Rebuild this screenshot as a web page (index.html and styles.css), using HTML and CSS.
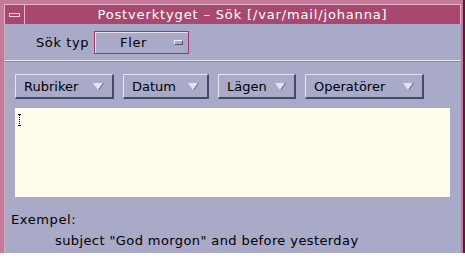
FILE: index.html
```html
<!DOCTYPE html>
<html lang="sv">
<head>
    <meta charset="UTF-8">
    <title>Postverktyget - Sök</title>
    <link rel="stylesheet" href="styles.css">
</head>
<body>
    <div class="window">
        <div class="titlebar">
            <div class="menu-btn"><span class="dash"></span></div>
            <div class="title">Postverktyget – Sök [/var/mail/johanna]</div>
        </div>
        <div class="content">
            <div class="type-row">
                <span class="label">Sök typ</span>
                <div class="choice">
                    <span>Fler</span>
                    <span class="choice-mark"></span>
                </div>
            </div>
            <div class="separator"></div>
            <div class="menu-row">
                <div class="menu-button" style="width:99px">Rubriker <span class="arrow"></span></div>
                <div class="menu-button" style="width:86px">Datum <span class="arrow"></span></div>
                <div class="menu-button" style="width:78px">Lägen <span class="arrow"></span></div>
                <div class="menu-button" style="width:119px">Operatörer <span class="arrow"></span></div>
            </div>
            <div class="textarea"><span class="caret"></span></div>
            <div class="example-label">Exempel:</div>
            <div class="example">subject "God morgon" and before yesterday</div>
        </div>
    </div>
</body>
</html>
```

FILE: styles.css
```css
body {
    margin: 0;
    padding: 0;
    background-color: #fff;
    font-family: "DejaVu Sans", sans-serif;
    width: 465px;
    height: 270px;
    overflow: hidden;
}
.window {
    width: 465px;
    height: 253px;
    box-sizing: border-box;
    background-color: #c47a98;
    border-right: 2px solid #5c1c38;
    padding: 4px 2px 0 4px;
    display: flex;
    flex-direction: column;
}
.titlebar {
    height: 19px;
    display: flex;
    background-color: #a8486e;
    border-top: 1px solid #e4b4c8;
    border-left: 1px solid #e4b4c8;
    border-right: 1px solid #e4b4c8;
}
.menu-btn {
    width: 19px;
    border-right: 1px solid #e4b4c8;
    display: flex;
    align-items: center;
    justify-content: center;
}
.dash {
    width: 9px;
    height: 2px;
    border: 1px solid #f0d0dc;
    background-color: #a8486e;
}
.title {
    flex: 1;
    text-align: center;
    color: #fff;
    font-size: 13px;
    letter-spacing: 0.85px;
    line-height: 19px;
}
.content {
    flex: 1;
    background-color: #a9a9c8;
    border-left: 1px solid #d8a8bc;
    padding: 0 10px 0 6px;
    font-size: 13px;
    letter-spacing: 0.6px;
    color: #000;
}
.type-row {
    display: flex;
    align-items: center;
    height: 36px;
    padding-left: 25px;
    gap: 5px;
}
.choice {
    width: 95px;
    height: 23px;
    box-sizing: border-box;
    border: 1px solid #9c3c64;
    box-shadow: inset 1px 1px 0 #e8e0ec;
    display: flex;
    align-items: center;
    padding-left: 25px;
    gap: 27px;
}
.choice-mark {
    width: 7px;
    height: 3px;
    border: 1px solid #f0f0f8;
    border-right-color: #505070;
    border-bottom-color: #505070;
}
.separator {
    height: 1px;
    background-color: #e4e4f0;
    border-bottom: 1px solid #8888a8;
    margin-left: -6px;
    margin-right: -10px;
}
.menu-row {
    display: flex;
    gap: 9px;
    padding: 12px 0 9px 4px;
}
.menu-button {
    height: 25px;
    box-sizing: border-box;
    border-top: 1px solid #e4e4f4;
    border-left: 1px solid #e4e4f4;
    border-right: 2px solid #48486a;
    border-bottom: 2px solid #48486a;
    display: flex;
    align-items: center;
    justify-content: space-between;
    padding: 0 9px 0 8px;
    letter-spacing: 0;
}
.arrow {
    flex: none;
    width: 0;
    height: 0;
    border-left: 5px solid transparent;
    border-right: 5px solid transparent;
    border-top: 7px solid #e4e4f0;
    filter: drop-shadow(1px 0 0 #55557a);
}
.textarea {
    margin-left: 4px;
    width: 435px;
    height: 89px;
    background-color: #fffcec;
    position: relative;
}
.caret {
    position: absolute;
    left: 4px;
    top: 6px;
    width: 1px;
    height: 12px;
    border-left: 1px dotted #000;
}
.caret::before,
.caret::after {
    content: "";
    position: absolute;
    left: -2px;
    width: 3px;
    height: 1px;
    background-color: #000;
}
.caret::before { top: 0; }
.caret::after { bottom: 0; }
.example-label {
    margin-top: 15px;
}
.example {
    margin-top: 6px;
    padding-left: 44px;
    letter-spacing: 0.4px;
}
```
